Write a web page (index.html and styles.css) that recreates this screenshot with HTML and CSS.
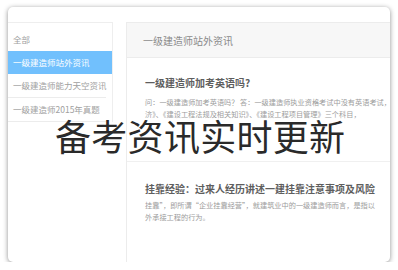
FILE: index.html
```html
<!DOCTYPE html>
<html lang="zh-CN">
<head>
  <meta charset="UTF-8" />
  <title>备考资讯实时更新</title>
  <link rel="stylesheet" href="styles.css">
</head>
<body>
  <div class="shot">
    <div class="page">
      <ul class="side">
        <li class="all">全部</li>
        <li class="active">一级建造师站外资讯</li>
        <li>一级建造师能力天空资讯</li>
        <li>一级建造师2015年真题</li>
      </ul>

      <div class="main">
        <div class="main-head">一级建造师站外资讯</div>
        <div class="news">
          <h3>一级建造师加考英语吗?</h3>
          <p>
            <span>问：一级建造师加考英语吗？ 答：一级建造师执业资格考试中没有英语考试，考试科目为《建设工程经</span>
            <span>济》、《建设工程法规及相关知识》、《建设工程项目管理》三个科目，</span>
          </p>
        </div>
        <div class="news">
          <h3>挂靠经验：过来人经历讲述一建挂靠注意事项及风险</h3>
          <p>
            <span>挂靠”，即所谓“企业挂靠经营”，就建筑业中的一级建造师而言，是指以</span>
            <span>外承接工程的行为。</span>
          </p>
        </div>
      </div>
    </div>

    <div class="banner">备考资讯实时更新</div>
  </div>
</body>
</html>
```

FILE: styles.css
```css
body {
  margin: 0;
  background: #ffffff;
  font-family: "Noto Sans CJK SC", "Noto Sans", sans-serif;
}

.shot {
  position: relative;
  margin: 7px 0 0 8px;
  width: 382px;
  height: 255px;
  background: #ffffff;
  border-radius: 5px;
  box-shadow: 0 1px 5px rgba(0, 0, 0, 0.45);
  overflow: hidden;
}

.page {
  display: flex;
  gap: 13px;
  padding-top: 15px;
  height: 240px;
}

.side {
  list-style: none;
  margin: 0;
  padding: 0;
  width: 104px;
  flex-shrink: 0;
  align-self: flex-start;
  border-top: 1px solid #eeeeee;
  border-right: 1px solid #eeeeee;
  font-size: 8.5px;
  color: #a0a0a0;
}

.side li {
  height: 23px;
  line-height: 23px;
  padding-left: 5px;
  margin: 0 6px 0 0;
  border-bottom: 1px solid #ececec;
  white-space: nowrap;
}

.side li.all {
  height: 28px;
  line-height: 32px;
  border-bottom: none;
  margin-right: 0;
}

.side li.active {
  background: #71c0fd;
  color: #ffffff;
  margin-right: 0;
  border-bottom: none;
}

.main {
  flex: 1;
  min-width: 0;
  border-left: 1px solid #ececec;
  border-top: 1px solid #ececec;
}

.main-head {
  height: 34px;
  line-height: 36px;
  padding-left: 16px;
  background: #f7f7f7;
  border-bottom: 1px solid #ececec;
  font-size: 10px;
  color: #8a8a8a;
  white-space: nowrap;
}

.news {
  padding: 17px 0 0 18px;
  height: 86px;
  border-bottom: 1px solid #f0f0f0;
}

.news + .news {
  border-bottom: none;
  padding-top: 19px;
}

.news h3 {
  margin: 0 0 7px;
  font-size: 10px;
  font-weight: bold;
  color: #5e5e5e;
  white-space: nowrap;
}

.news + .news h3 {
  margin-bottom: 4px;
}

.news p {
  margin: 0;
  font-size: 7.2px;
  line-height: 11.5px;
  color: #9c9c9c;
}

.news p span {
  display: block;
  white-space: nowrap;
}

.banner {
  position: absolute;
  left: 47px;
  top: 106px;
  font-size: 36px;
  line-height: 44px;
  color: #2a2a2a;
  white-space: nowrap;
  letter-spacing: 0.3px;
}
```
